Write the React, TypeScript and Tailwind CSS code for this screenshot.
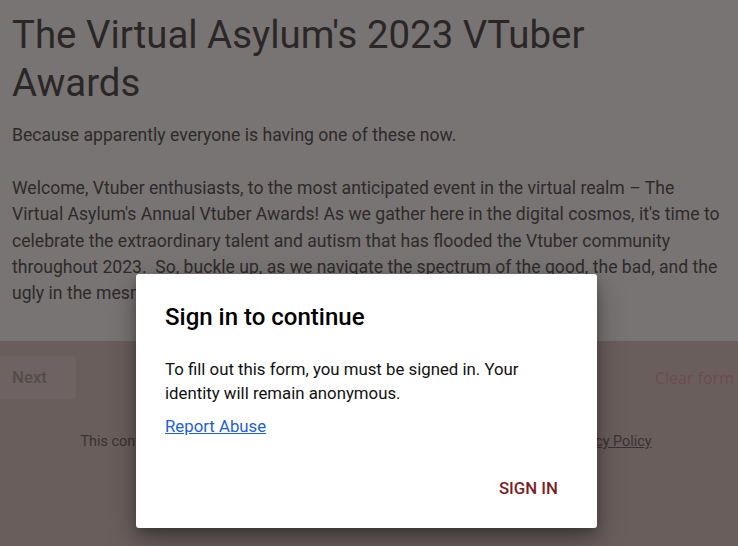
import React from "react";

export default function App() {
  return (
    <div className="relative h-[546px] w-full overflow-hidden bg-[#6a5e5d] font-['Roboto',sans-serif]">
      <div className="h-[341px] bg-[#787473] pl-3 pr-3 pt-[11px]">
        <h1 className="max-w-[640px] text-[38.4px] leading-[48px] text-[#2b2727]">
          The Virtual Asylum's 2023 VTuber Awards
        </h1>
        <div className="mt-[15px] whitespace-pre-wrap text-[17.6px] leading-[26.4px] text-[#2e2a2a]">
          {"Because apparently everyone is having one of these now.\n\nWelcome, Vtuber enthusiasts, to the most anticipated event in the virtual realm – The Virtual Asylum's Annual Vtuber Awards! As we gather here in the digital cosmos, it's time to celebrate the extraordinary talent and autism that has flooded the Vtuber community throughout 2023.  So, buckle up, as we navigate the spectrum of the good, the bad, and the ugly in the mesmerizing world of Vtubers."}
        </div>
      </div>

      <div className="mt-[15px] flex items-center justify-between">
        <button className="ml-[-12px] h-[43px] rounded-[4px] bg-[#6e6362] pl-6 pr-[29px] text-[16.8px] font-medium text-[#554b4a]">
          Next
        </button>
        <span className="mr-[4px] whitespace-nowrap font-['Open_Sans',sans-serif] text-[16px] font-medium text-[#6e4b4d]">
          Clear form
        </span>
      </div>

      <div className="mt-[32px] pr-[6px] text-center text-[14.4px] text-[#3a3232]">
        This content is neither created nor endorsed by Google. - <span className="underline">Terms of Service</span> - <span className="underline">Privacy Policy</span>
      </div>

      <div className="absolute left-[136px] top-[274px] flex h-[254px] w-[461px] flex-col rounded-[3px] bg-white shadow-[0_12px_28px_rgba(0,0,0,0.35),0_4px_10px_rgba(0,0,0,0.2)]">
        <div className="px-[29px] pt-[27px]">
          <h2 className="text-[24px] font-medium leading-[32px] text-black">Sign in to continue</h2>
          <p className="mt-[24px] text-[16.8px] leading-[24px] text-[#111]">
            To fill out this form, you must be signed in. Your identity will remain anonymous.
          </p>
          <a href="#" className="mt-[9px] block w-fit text-[16.8px] leading-[24px] text-[#1f5fd6] underline">
            Report Abuse
          </a>
        </div>
        <div className="mt-auto flex justify-end pb-[28px] pr-[39px]">
          <span className="text-[16.8px] font-medium leading-[24px] text-[#7b1e1e]">SIGN IN</span>
        </div>
      </div>
    </div>
  );
}
